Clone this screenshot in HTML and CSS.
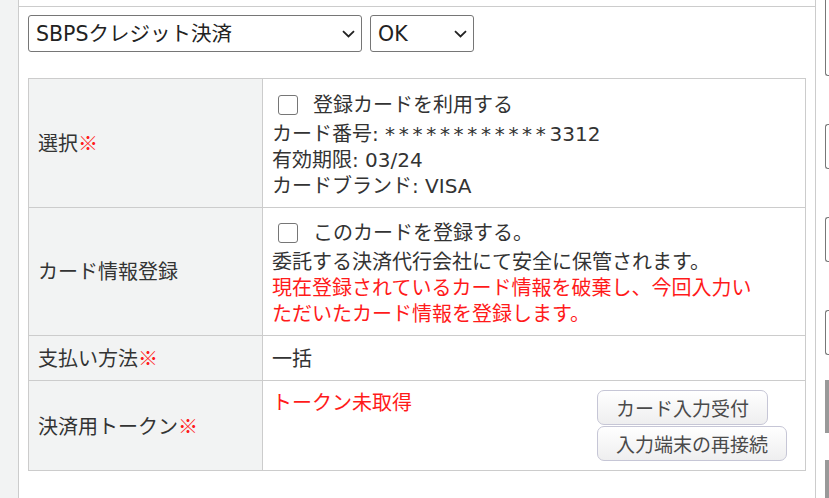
FILE: index.html
```html
<!DOCTYPE html>
<html lang="ja">
<head>
    <meta charset="UTF-8">
    <meta name="viewport" content="width=device-width, initial-scale=1.0">
    <title>決済</title>
    <link rel="stylesheet" href="styles.css">
</head>
<body>

<div class="side"></div>

<div class="panel">
    <div class="panel-top"></div>
    <div class="panel-body">
        <div class="select-row">
            <div class="select-wrap wide">
                <select class="select">
                    <option>SBPSクレジット決済</option>
                </select>
                <svg class="chevron" width="13" height="8" viewBox="0 0 13 8"><path d="M1 1.2 L6.5 6.5 L12 1.2" fill="none" stroke="#222" stroke-width="1.8"/></svg>
            </div>
            <div class="select-wrap narrow">
                <select class="select">
                    <option>OK</option>
                </select>
                <svg class="chevron" width="13" height="8" viewBox="0 0 13 8"><path d="M1 1.2 L6.5 6.5 L12 1.2" fill="none" stroke="#222" stroke-width="1.8"/></svg>
            </div>
        </div>

        <table class="pay-table">
            <tr>
                <th>選択<span class="req">※</span></th>
                <td>
                    <label class="check-line first"><span class="box"></span>登録カードを利用する</label>
                    <div>カード番号: <span class="mask">************</span>3312</div>
                    <div>有効期限: 03/24</div>
                    <div>カードブランド: VISA</div>
                </td>
            </tr>
            <tr>
                <th>カード情報登録</th>
                <td>
                    <label class="check-line"><span class="box"></span>このカードを登録する。</label>
                    <div>委託する決済代行会社にて安全に保管されます。</div>
                    <div class="red note">現在登録されているカード情報を破棄し、今回入力いただいたカード情報を登録します。</div>
                </td>
            </tr>
            <tr>
                <th>支払い方法<span class="req">※</span></th>
                <td>一括</td>
            </tr>
            <tr>
                <th>決済用トークン<span class="req">※</span></th>
                <td>
                    <div class="token-row">
                        <div class="red">トークン未取得</div>
                        <div class="token-buttons">
                            <button type="button" class="btn">カード入力受付</button>
                            <button type="button" class="btn">入力端末の再接続</button>
                        </div>
                    </div>
                </td>
            </tr>
        </table>
    </div>
</div>

<div class="edge">
    <div class="edge-box first"></div>
    <div class="edge-box"></div>
    <div class="edge-box"></div>
    <div class="edge-box"></div>
    <div class="edge-bar"></div>
    <div class="edge-bar last"></div>
</div>

</body>
</html>
```

FILE: styles.css
```css
body {
    margin: 0;
    padding: 0;
    display: flex;
    min-height: 498px;
    font-family: "DejaVu Sans", "Noto Sans CJK JP", sans-serif;
    font-size: 20px;
    color: #333;
    background-color: #fff;
    overflow: hidden;
}

.side {
    width: 18px;
    flex: none;
    background-color: #f2f3f3;
    border-right: 1px solid #ccc;
}

.panel {
    width: 796px;
    flex: none;
    border-right: 1px solid #ccc;
}

.panel-top {
    height: 6px;
    border-bottom: 1px solid #ccc;
}

.panel-body {
    padding: 8px 0 0 9px;
}

.select-row {
    display: flex;
    gap: 8px;
    margin-bottom: 26px;
}

.select-wrap {
    position: relative;
}

.select-wrap.wide {
    width: 334px;
}

.select-wrap.narrow {
    width: 104px;
}

.select {
    appearance: none;
    -webkit-appearance: none;
    width: 100%;
    height: 37px;
    margin: 0;
    padding: 0 0 0 7px;
    border: 1px solid #767676;
    border-radius: 3px;
    background-color: #fff;
    font-family: inherit;
    font-size: 20.5px;
    color: #222;
}

.chevron {
    position: absolute;
    right: 7px;
    top: 15px;
}

.pay-table {
    width: 778px;
    border-collapse: collapse;
    line-height: 26px;
}

.pay-table th,
.pay-table td {
    border: 1px solid #ccc;
    padding: 9px 9px 8px 9px;
    vertical-align: middle;
    text-align: left;
}

.pay-table th {
    width: 215px;
    font-weight: normal;
    background-color: #f2f3f3;
}

.req {
    color: #ff1a1a;
    font-family: "Noto Sans CJK JP", sans-serif;
}

.red {
    color: #ff1a1a;
}

.note {
    max-width: 490px;
}

.mask {
    letter-spacing: 3.7px;
}

.check-line {
    display: flex;
    align-items: center;
    height: 32px;
}

.check-line.first {
    height: 33px;
}

.box {
    width: 18px;
    height: 18px;
    margin: 0 15px 0 6px;
    border: 1px solid #767676;
    border-radius: 3px;
    background-color: #fff;
}

.token-row {
    display: flex;
    justify-content: space-between;
    align-items: flex-start;
}

.token-buttons {
    display: flex;
    flex-direction: column;
    align-items: flex-start;
    margin-right: 9px;
}

.btn {
    height: 35px;
    margin: 0 0 1px 0;
    padding: 0 18px;
    border: 1px solid #c6c6d6;
    border-radius: 7px;
    background: linear-gradient(#fff, #eeeeef);
    font-family: "Noto Sans CJK JP", sans-serif;
    font-size: 19px;
    color: #4a4a4a;
}

.edge {
    flex: 1;
    padding-left: 9px;
}

.edge-box {
    height: 43px;
    margin-top: 48px;
    border: 1px solid #777;
    border-right: none;
    border-radius: 3px 0 0 3px;
}

.edge-box.first {
    height: 80px;
    margin-top: -6px;
}

.edge-bar {
    height: 53px;
    margin-top: 25px;
    background-color: #999;
}

.edge-bar.last {
    margin-top: 27px;
    height: 43px;
}
```
